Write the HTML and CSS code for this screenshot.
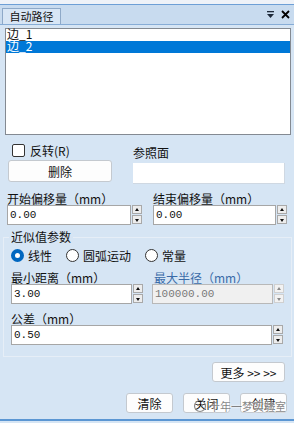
FILE: index.html
```html
<!DOCTYPE html>
<html lang="zh">
<head>
    <meta charset="UTF-8">
    <title>自动路径</title>
    <link rel="stylesheet" href="styles.css">
</head>
<body>

<div class="panel">
    <div class="top-strip"></div>

    <div class="tab-bar">
        <div class="tab">自动路径</div>
        <div class="tab-actions">
            <svg width="9" height="9" viewBox="0 0 9 9"><rect x="1" y="1" width="7" height="1.3" fill="#1e2a3a"/><path d="M1 4 L8 4 L4.5 8 Z" fill="#1e2a3a"/></svg>
            <svg width="9" height="9" viewBox="0 0 9 9"><path d="M1 1 L8 8 M8 1 L1 8" stroke="#000" stroke-width="1.8"/></svg>
        </div>
    </div>

    <div class="edge-list">
        <div class="edge-item">边_1</div>
        <div class="edge-item selected">边_2</div>
    </div>

    <div class="row row-ref">
        <div class="col-left">
            <label class="check"><span class="check-box"></span>反转(R)</label>
            <button class="btn btn-delete">删除</button>
        </div>
        <div class="col-right">
            <div class="ref-label">参照面</div>
            <div class="ref-box"></div>
        </div>
    </div>

    <div class="row row-offset">
        <div class="field field-left">
            <div class="field-label">开始偏移量（mm）</div>
            <div class="spin-input">
                <div class="input">0.00</div>
                <div class="spinner"><span class="up"></span><span class="down"></span></div>
            </div>
        </div>
        <div class="field field-right">
            <div class="field-label">结束偏移量（mm）</div>
            <div class="spin-input">
                <div class="input">0.00</div>
                <div class="spinner"><span class="up"></span><span class="down"></span></div>
            </div>
        </div>
    </div>

    <fieldset class="group">
        <legend>近似值参数</legend>
        <div class="radios">
            <label class="radio"><span class="radio-dot checked"></span>线性</label>
            <label class="radio"><span class="radio-dot"></span>圆弧运动</label>
            <label class="radio"><span class="radio-dot"></span>常量</label>
        </div>

        <div class="row row-dist">
            <div class="field field-left">
                <div class="field-label">最小距离（mm）</div>
                <div class="spin-input">
                    <div class="input">3.00</div>
                    <div class="spinner"><span class="up"></span><span class="down"></span></div>
                </div>
            </div>
            <div class="field field-right">
                <div class="field-label disabled-label">最大半径（mm）</div>
                <div class="spin-input disabled">
                    <div class="input">100000.00</div>
                    <div class="spinner"><span class="up"></span><span class="down"></span></div>
                </div>
            </div>
        </div>

        <div class="field field-tol">
            <div class="field-label">公差（mm）</div>
            <div class="spin-input">
                <div class="input">0.50</div>
                <div class="spinner"><span class="up"></span><span class="down"></span></div>
            </div>
        </div>
    </fieldset>

    <div class="more-row">
        <button class="btn btn-more">更多 &gt;&gt; &gt;&gt;</button>
    </div>

    <div class="actions">
        <button class="btn btn-action">清除</button>
        <button class="btn btn-action">关闭</button>
        <button class="btn btn-action">创建</button>
    </div>

    <div class="bottom-line"></div>

    <div class="watermark">
        <svg width="14" height="14" viewBox="0 0 14 14"><circle cx="7" cy="7" r="5.5" fill="none" stroke="#8a8a8a" stroke-width="1.2"/><circle cx="5" cy="6" r="1" fill="#8a8a8a"/><circle cx="9" cy="6" r="1" fill="#8a8a8a"/></svg>
        <span>十年一梦实验室</span>
    </div>
</div>

</body>
</html>
```

FILE: styles.css
```css
html, body {
    margin: 0;
    padding: 0;
}

body {
    width: 294px;
    height: 423px;
    overflow: hidden;
    background-color: #d6e5f4;
    font-family: "Noto Sans CJK SC", "Liberation Sans", sans-serif;
    font-size: 12px;
    color: #111;
}

.panel {
    position: relative;
    height: 423px;
}

.top-strip {
    height: 4px;
    background-color: #eef2f8;
    border-bottom: 1px solid #6d9fd6;
}

.tab-bar {
    display: flex;
    align-items: flex-end;
    height: 19px;
    padding-left: 2px;
    background-color: #c8dbef;
    border-bottom: 1px solid #86acd6;
}

.tab {
    width: 57px;
    height: 15px;
    line-height: 15px;
    text-align: center;
    font-size: 11px;
    background-color: #d8e6f5;
    border: 1px solid #8ea9c8;
    border-bottom: none;
}

.tab-actions {
    display: flex;
    gap: 6px;
    align-items: center;
    margin-left: auto;
    margin-right: 4px;
    align-self: center;
}

.edge-list {
    margin: 3px 3px 0 5px;
    height: 105px;
    background-color: #fff;
    border: 1px solid #848a92;
}

.edge-item {
    height: 12px;
    line-height: 10px;
    padding-left: 1px;
    font-size: 12px;
}

.edge-item.selected {
    background-color: #0078d7;
    color: #fff;
}

.row {
    display: flex;
}

.row-ref {
    margin-top: 8px;
}

.col-left {
    width: 133px;
    padding-left: 8px;
    box-sizing: border-box;
}

.col-right {
    flex: 1;
}

.check {
    display: flex;
    align-items: center;
    gap: 5px;
    height: 14px;
    padding-left: 4px;
}

.check-box {
    width: 11px;
    height: 11px;
    border: 1px solid #333;
    border-radius: 2px;
    background-color: #fff;
}

.btn {
    font-family: "Noto Sans CJK SC", "Liberation Sans", sans-serif;
    font-size: 12px;
    color: #111;
    background-color: #fdfdfd;
    border: 1px solid #c4c9cf;
    border-radius: 3px;
    padding: 0;
}

.btn-delete {
    display: block;
    width: 104px;
    height: 22px;
    margin-top: 3px;
}

.ref-label {
    height: 12px;
    line-height: 12px;
    margin-top: 4px;
}

.ref-box {
    width: 151px;
    height: 20px;
    margin-top: 4px;
    background-color: #fff;
    border-right: 1px solid #cfd8e2;
    border-bottom: 1px solid #cfd8e2;
}

.row-offset {
    margin-top: 9px;
}

.field-label {
    height: 12px;
    line-height: 12px;
    font-size: 12px;
}

.field-left {
    width: 153px;
    padding-left: 7px;
    box-sizing: border-box;
}

.field-right {
    flex: 1;
}

.spin-input {
    display: flex;
}

.input {
    height: 18px;
    line-height: 18px;
    padding-left: 2px;
    background-color: #fff;
    border: 1px solid #a6a6a6;
    font-family: "Liberation Mono", monospace;
    font-size: 11px;
}

.field-left .input {
    width: 120px;
}

.field-right .input {
    width: 119px;
}

.spinner {
    display: flex;
    flex-direction: column;
    width: 10px;
    margin-left: 1px;
}

.spinner span {
    position: relative;
    height: 9px;
    background-color: #ededed;
    border: 1px solid #a9a9a9;
    box-sizing: border-box;
}

.spinner span + span {
    margin-top: 1px;
}

.spinner .up::after,
.spinner .down::after {
    content: "";
    position: absolute;
    left: 2px;
    border-left: 2.5px solid transparent;
    border-right: 2.5px solid transparent;
}

.spinner .up::after {
    top: 2px;
    border-bottom: 3px solid #111;
}

.spinner .down::after {
    top: 3px;
    border-top: 3px solid #111;
}

.spin-input.disabled .input {
    background-color: #f0f0f0;
    color: #7a7a7a;
    border-color: #b8b8b8;
}

.spin-input.disabled .spinner span {
    border-color: #d0d0d0;
    background-color: #f2f2f2;
}

.spin-input.disabled .spinner .up::after {
    border-bottom-color: #8a8a8a;
}

.spin-input.disabled .spinner .down::after {
    border-top-color: #8a8a8a;
}

.disabled-label {
    color: #3a6ba8;
    padding-left: 2px;
}

.group {
    margin: 5px 2px 0 3px;
    padding: 0 0 11px 0;
    border: 1px solid #e6eef7;
}

.group legend {
    margin-left: 5px;
    padding: 0 2px;
    font-size: 12px;
    line-height: 14px;
}

.radios {
    display: flex;
    margin-top: 5px;
    padding-left: 7px;
    height: 13px;
}

.radio {
    display: flex;
    align-items: center;
    gap: 4px;
}

.radio + .radio {
    margin-left: 14px;
}

.radio-dot {
    width: 11px;
    height: 11px;
    border: 1px solid #333;
    border-radius: 50%;
    background-color: #fff;
}

.radio-dot.checked {
    width: 5px;
    height: 5px;
    border: 4px solid #0067c0;
}

.row-dist {
    margin-top: 10px;
}

.row-dist .field-left {
    width: 148px;
    padding-left: 7px;
}

.row-dist .field-left .input {
    width: 117px;
}

.row-dist .field-right .input {
    width: 117px;
}

.field-tol {
    margin-top: 9px;
    padding-left: 7px;
}

.field-tol .input {
    width: 257px;
}

.more-row {
    display: flex;
    justify-content: flex-end;
    margin-top: 5px;
    padding-right: 9px;
}

.btn-more {
    width: 73px;
    height: 20px;
}

.actions {
    display: flex;
    justify-content: flex-end;
    gap: 10px;
    margin-top: 11px;
    padding-right: 7px;
}

.btn-action {
    width: 47px;
    height: 20px;
}

.bottom-line {
    margin-top: 6px;
    height: 2px;
    background-color: #5b96d3;
}

.watermark {
    position: absolute;
    left: 193px;
    top: 398px;
    display: flex;
    align-items: center;
    gap: 2px;
    font-size: 11px;
    color: rgba(90, 90, 90, 0.75);
    text-shadow: 0 0 2px #fff, 0 0 2px #fff;
}
```
